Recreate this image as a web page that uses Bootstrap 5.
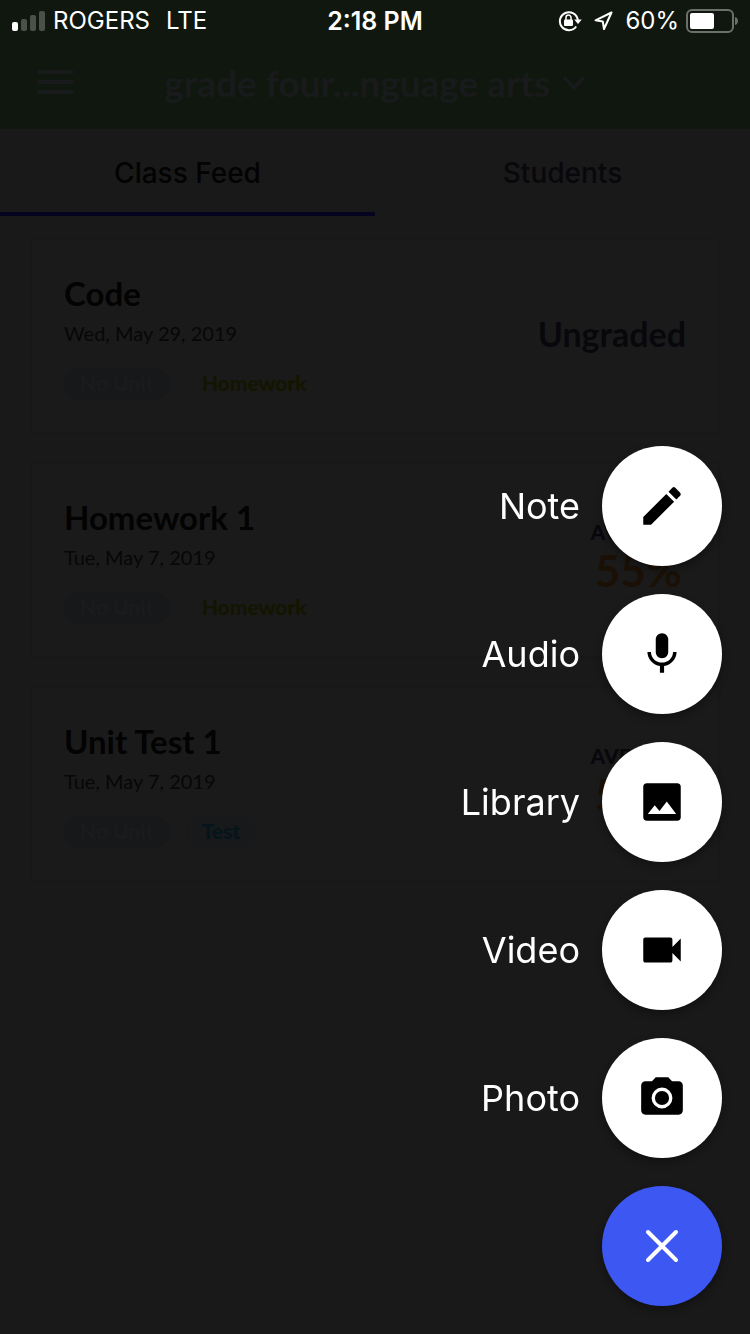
<!DOCTYPE html>
<html lang="en">
<head>
<meta charset="utf-8">
<meta name="viewport" content="width=device-width, initial-scale=1">
<title>Class Feed</title>
<link href="https://cdn.jsdelivr.net/npm/bootstrap@5.3.0/dist/css/bootstrap.min.css" rel="stylesheet">
<style>
  body { background: #191919; color: #030303; font-family: Inter, "Liberation Sans", sans-serif; }
  .screen { min-height: 100vh; }
  .top-bar { background: #10170e; }
  .status-bar { height: 41px; padding: 0 12px; color: #fff; font-size: 24px; line-height: 40px; }
  .status-bar svg, .title-bar svg, .fab svg { display: block; flex: none; }
  .status-time { font-size: 25px; font-weight: 600; }
  .status-icons { gap: 12px; }
  .battery { gap: 6px; }
  .title-bar { height: 88px; padding: 0 36px; }
  .plain-btn { border: 0; background: none; padding: 0; color: #191a1b; }
  .class-picker { font-family: Lato, sans-serif; font-size: 37px; line-height: 44px; font-weight: 700; padding-bottom: 4px; }
  .tab-link { height: 87px; padding-top: 4px; border-bottom: 4px solid transparent; color: #08080c; font-size: 28px; line-height: 40px; font-weight: 500; text-decoration: none; }
  .tab-link.active { color: #030303; border-color: #040420; }
  .feed { padding: 24px 32px; gap: 32px; font-family: Lato, sans-serif; }
  .feed-card { height: 192px; padding: 32px; background: #1a1a1a; box-shadow: 0 1px 2px #181818; }
  .feed-title { font-size: 33px; line-height: 42px; font-weight: 700; margin: 0; }
  .feed-date { font-size: 20px; line-height: 28px; margin: 5px 0 21px; color: #070707; }
  .tag { height: 32px; padding: 0 16px; border-radius: 16px; font-size: 21px; line-height: 30px; font-weight: 900; }
  .tag-unit { background: #17181a; color: #1b1b1d; }
  .tag-homework { color: #141500; }
  .tag-test { background: #18191a; color: #04151c; }
  .grade { padding-bottom: 4px; }
  .ungraded { font-size: 34px; line-height: 44px; font-weight: 700; color: #08080c; }
  .avg-label { font-size: 21px; line-height: 24px; font-weight: 900; color: #08080c; }
  .avg-value { font-size: 44px; line-height: 52px; font-weight: 700; color: #1b1006; }
  .fab-menu { position: fixed; right: 28px; bottom: 28px; gap: 28px; }
  .fab-row { gap: 22px; color: #fff; font-size: 36px; line-height: 48px; font-weight: 400; }
  .fab { width: 120px; height: 120px; border: 0; border-radius: 50%; background: #fff; color: #000; box-shadow: 0 4px 8px #0005; }
  .fab-close { background: #3d57f2; color: #fff; }
</style>
</head>
<body>
<div class="screen">
  <header class="top-bar">
    <div class="status-bar row g-0 align-items-center">
      <div class="col d-flex align-items-center gap-2">
        <svg width="33" height="20" viewBox="0 0 33 20" aria-hidden="true"><rect y="11" width="6" height="9" rx="2" fill="#fff"/><g fill="#4a504a"><rect x="9" y="8" width="6" height="12" rx="2"/><rect x="18" y="4" width="6" height="16" rx="2"/><rect x="27" width="6" height="20" rx="2"/></g></svg>
        <span>ROGERS</span><span class="ps-2">LTE</span>
      </div>
      <div class="col-auto status-time">2:18 PM</div>
      <div class="col status-icons d-flex align-items-center justify-content-end">
        <svg width="24" height="22" viewBox="0 0 24 22" fill="none" aria-hidden="true"><path d="M18.200 16.500A9 9 0 1 1 19.800 10" stroke="#fff" stroke-width="2"/><path d="M16.200 9.500h7.600L20 14z" fill="#fff"/><rect x="6" y="9.500" width="9" height="6.500" rx="1" fill="#fff"/><path d="M8 10V7.500a2.500 2.500 0 0 1 5 0V10" stroke="#fff" stroke-width="1.500"/></svg>
        <svg width="19" height="20" viewBox="0 0 19 20" aria-hidden="true"><path d="M17.500 1.500 1.500 9.300l7.300 1.200L10 18z" fill="none" stroke="#fff" stroke-width="2" stroke-linejoin="round"/></svg>
        <div class="battery d-flex align-items-center"><span>60%</span>
        <svg width="53" height="24" viewBox="0 0 53 24" aria-hidden="true"><rect x="2" y="1" width="46" height="22" rx="5" fill="none" stroke="#6b706a" stroke-width="2"/><rect x="5" y="4" width="24" height="16" rx="2" fill="#fff"/><path d="M50 8c4 1 4 7 0 8z" fill="#6b706a"/></svg></div>
      </div>
    </div>
    <div class="title-bar row g-0 align-items-center">
      <div class="col">
        <button class="plain-btn" type="button" aria-label="Menu"><svg width="39" height="26" viewBox="0 0 39 26" stroke="currentColor" stroke-width="4" stroke-linecap="round"><path d="M3 3h33M3 13h33M3 23h33"/></svg></button>
      </div>
      <div class="col-auto">
        <button class="plain-btn class-picker d-flex align-items-center gap-2" type="button"><span>grade four...nguage arts</span><svg class="ms-1" width="24" height="16" viewBox="0 0 24 16" fill="none" stroke="currentColor" stroke-width="4"><path d="m2 2 10 11L22 2"/></svg></button>
      </div>
      <div class="col"></div>
    </div>
  </header>

  <nav class="row g-0 text-center" aria-label="Class sections">
    <a class="col tab-link active d-flex align-items-center justify-content-center" href="#feed" aria-current="page">Class Feed</a>
    <a class="col tab-link d-flex align-items-center justify-content-center" href="#students">Students</a>
  </nav>

  <main class="feed d-flex flex-column" id="feed">
    <article class="feed-card d-flex justify-content-between align-items-center">
      <div>
        <h2 class="feed-title">Code</h2>
        <p class="feed-date">Wed, May 29, 2019</p>
        <div class="d-flex gap-3"><span class="tag tag-unit">No Unit</span><span class="tag tag-homework">Homework</span></div>
      </div>
      <div class="grade ungraded">Ungraded</div>
    </article>
    <article class="feed-card d-flex justify-content-between align-items-center">
      <div>
        <h2 class="feed-title">Homework 1</h2>
        <p class="feed-date">Tue, May 7, 2019</p>
        <div class="d-flex gap-3"><span class="tag tag-unit">No Unit</span><span class="tag tag-homework">Homework</span></div>
      </div>
      <div class="grade text-center"><div class="avg-label">AVERAGE</div><div class="avg-value">55%</div></div>
    </article>
    <article class="feed-card d-flex justify-content-between align-items-center">
      <div>
        <h2 class="feed-title">Unit Test 1</h2>
        <p class="feed-date">Tue, May 7, 2019</p>
        <div class="d-flex gap-3"><span class="tag tag-unit">No Unit</span><span class="tag tag-test">Test</span></div>
      </div>
      <div class="grade text-center"><div class="avg-label">AVERAGE</div><div class="avg-value">55%</div></div>
    </article>
  </main>
</div>

<div class="fab-menu d-flex flex-column align-items-end">
  <div class="fab-row d-flex align-items-center"><label for="add-note">Note</label>
    <button class="fab d-flex align-items-center justify-content-center p-0" id="add-note" type="button"><svg width="50" height="50" viewBox="0 0 24 24" fill="currentColor"><path d="M3 17.250V21h3.750L17.810 9.940l-3.750-3.750zM20.710 7.040a1 1 0 0 0 0-1.410l-2.340-2.340a1 1 0 0 0-1.410 0l-1.830 1.830 3.750 3.750z"/></svg></button></div>
  <div class="fab-row d-flex align-items-center"><label for="add-audio">Audio</label>
    <button class="fab d-flex align-items-center justify-content-center p-0" id="add-audio" type="button"><svg width="50" height="50" viewBox="0 0 24 24" fill="currentColor"><path d="M12 14c1.660 0 2.990-1.340 2.990-3L15 5c0-1.660-1.340-3-3-3S9 3.340 9 5v6c0 1.660 1.340 3 3 3zm5.300-3c0 3-2.540 5.100-5.300 5.100S6.700 14 6.700 11H5c0 3.410 2.720 6.230 6 6.720V21h2v-3.280c3.280-.48 6-3.300 6-6.720z"/></svg></button></div>
  <div class="fab-row d-flex align-items-center"><label for="add-library">Library</label>
    <button class="fab d-flex align-items-center justify-content-center p-0" id="add-library" type="button"><svg width="50" height="50" viewBox="0 0 24 24"><rect x="3" y="3" width="18" height="18" rx="1.800" fill="currentColor"/><path d="m5.200 17.800 3.300-4.300 2.300 2.800 3.500-4.500 4.500 6z" fill="#fff"/></svg></button></div>
  <div class="fab-row d-flex align-items-center"><label for="add-video">Video</label>
    <button class="fab d-flex align-items-center justify-content-center p-0" id="add-video" type="button"><svg width="50" height="50" viewBox="0 0 24 24" fill="currentColor"><path d="M17 10.500V7c0-.55-.45-1-1-1H4c-.55 0-1 .45-1 1v10c0 .55.450 1 1 1h12c.55 0 1-.45 1-1v-3.500l4 4v-11z"/></svg></button></div>
  <div class="fab-row d-flex align-items-center"><label for="add-photo">Photo</label>
    <button class="fab d-flex align-items-center justify-content-center p-0" id="add-photo" type="button"><svg width="50" height="50" viewBox="0 0 24 24" fill="currentColor"><circle cx="12" cy="12" r="3.400"/><path d="M9 2 7.170 4H4c-1.100 0-2 .9-2 2v12c0 1.100.9 2 2 2h16c1.100 0 2-.9 2-2V6c0-1.100-.9-2-2-2h-3.170L15 2zm3 15a5 5 0 1 1 0-10 5 5 0 0 1 0 10z"/></svg></button></div>
  <button class="fab fab-close d-flex align-items-center justify-content-center p-0" type="button" aria-label="Close"><svg width="34" height="34" viewBox="0 0 34 34" stroke="currentColor" stroke-width="4" stroke-linecap="round"><path d="m3 3 28 28M31 3 3 31"/></svg></button>
</div>
<script src="https://cdn.jsdelivr.net/npm/bootstrap@5.3.0/dist/js/bootstrap.bundle.min.js"></script>
</body>
</html>
